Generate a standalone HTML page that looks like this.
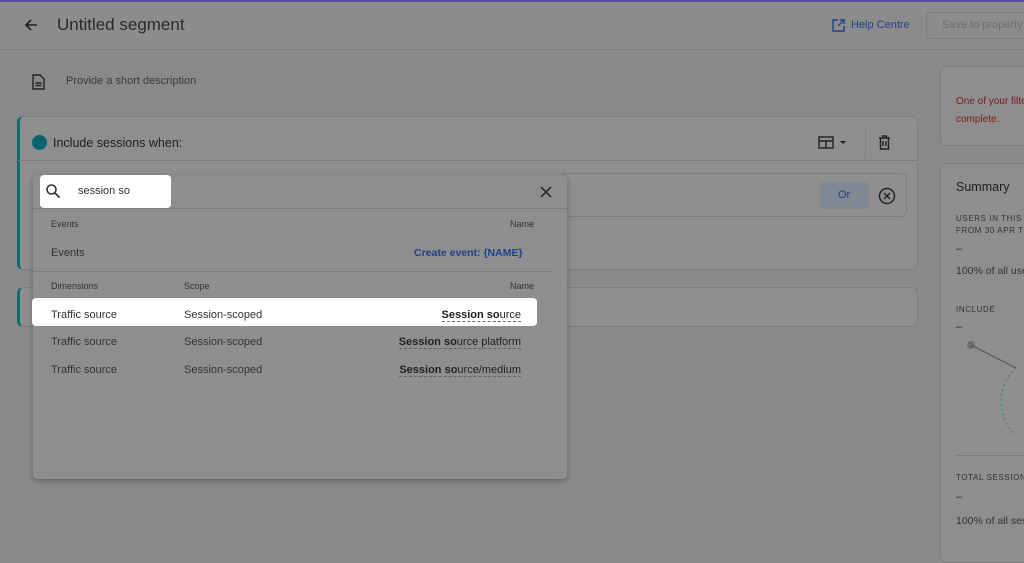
<!DOCTYPE html>
<html><head><meta charset="utf-8"><style>
*{box-sizing:border-box;margin:0;padding:0}
body{width:1024px;height:553px;overflow:hidden;background:#8a8a8a;font-family:"Liberation Sans",sans-serif;position:relative;color:#2a2a2a}
.a{position:absolute}
.card{position:absolute;background:#8e8e8e;border:1px solid #7f7f7f;border-radius:6px}
.t{position:absolute;font-size:11px;white-space:nowrap}
.dash{border-bottom:1px dashed #666}
</style></head><body>
<div class="a" style="left:0;top:0;width:1024px;height:2px;background:#5a4d99"></div>
<div class="a" style="left:0;top:2px;width:1024px;height:48px;background:#8c8c8c;border-bottom:1px solid #7c7c7c"></div>
<svg class="a" style="left:23px;top:17px" width="16" height="16" viewBox="0 0 16 16"><path d="M14 8H3M8 3L3 8l5 5" stroke="#222" stroke-width="1.6" fill="none"/></svg>
<div class="t" style="left:57px;top:15px;font-size:17px;color:#2a2a2a">Untitled segment</div>
<svg class="a" style="left:832px;top:19px" width="13" height="13" viewBox="0 0 13 13"><path d="M6 1H1v11h11V7M8 1h4v4M12 1L6 7" stroke="#22408a" stroke-width="1.4" fill="none"/></svg>
<div class="t" style="left:851px;top:19px;font-size:11px;color:#22408a">Help Centre</div>
<div class="a" style="left:926px;top:12px;width:110px;height:27px;border:1px solid #7c7c7c;border-radius:4px"></div>
<div class="t" style="left:942px;top:19px;font-size:11px;color:#6e6e6e">Save to property</div>
<div class="a" style="left:17px;top:66px;width:900px;height:32px;background:#87898a;border-radius:4px"></div>
<svg class="a" style="left:32px;top:74px" width="13" height="16" viewBox="0 0 13 16"><path d="M1 1h7l4 4v10H1z M3.5 9h6M3.5 11.5h6" stroke="#222" stroke-width="1.4" fill="none"/></svg>
<div class="t" style="left:66px;top:75px;font-size:11px;color:#3a3a3a">Provide a short description</div>
<div class="card" style="left:17px;top:116px;width:901px;height:154px;border-left:3px solid #0c6f78"></div>
<div class="a" style="left:18px;top:160px;width:899px;height:1px;background:#7c7c7c"></div>
<div class="a" style="left:32px;top:135px;width:15px;height:15px;border-radius:50%;background:#0b6570"></div>
<div class="t" style="left:53px;top:136px;font-size:12.5px;color:#1e1e1e">Include sessions when:</div>
<svg class="a" style="left:818px;top:136px" width="32" height="14" viewBox="0 0 32 14"><rect x="1" y="1" width="14" height="11" stroke="#222" stroke-width="1.4" fill="none"/><path d="M1 5h14M8 5v7" stroke="#222" stroke-width="1.4"/><path d="M22 5h6l-3 3z" fill="#222"/></svg>
<div class="a" style="left:865px;top:128px;width:1px;height:30px;background:#7f7f7f"></div>
<svg class="a" style="left:878px;top:135px" width="13" height="15" viewBox="0 0 13 15"><path d="M1 3h11M4.5 3V1h4v2M2.5 3v11h8V3M5 6v5M8 6v5" stroke="#222" stroke-width="1.4" fill="none"/></svg>
<div class="a" style="left:560px;top:173px;width:347px;height:44px;border:1px solid #7c7c7c;border-radius:6px"></div>
<div class="a" style="left:820px;top:182px;width:49px;height:27px;background:#7f8893;border-radius:3px"></div>
<div class="t" style="left:838px;top:189px;font-size:11px;color:#22408a">Or</div>
<svg class="a" style="left:878px;top:187px" width="18" height="18" viewBox="0 0 18 18"><circle cx="9" cy="9" r="7.5" stroke="#222" stroke-width="1.4" fill="none"/><path d="M6 6l6 6M12 6l-6 6" stroke="#222" stroke-width="1.4"/></svg>
<div class="card" style="left:17px;top:287px;width:901px;height:40px;border-left:3px solid #0c6f78"></div>
<div class="card" style="left:940px;top:66px;width:100px;height:80px"></div>
<div class="t" style="left:956px;top:93px;font-size:10px;color:#7a1c1c;line-height:18px">One of your filters is in<br>complete.</div>
<div class="card" style="left:940px;top:163px;width:100px;height:400px"></div>
<div class="t" style="left:956px;top:180px;font-size:12.5px;color:#1e1e1e">Summary</div>
<div class="t" style="left:956px;top:213px;font-size:8px;color:#333;letter-spacing:.6px;line-height:12px">USERS IN THIS SEGMENT<br>FROM 30 APR TO</div>
<div class="t" style="left:956px;top:243px;font-size:11px">–</div>
<div class="t" style="left:956px;top:265px;font-size:10.5px;color:#333">100% of all users</div>
<div class="t" style="left:956px;top:305px;font-size:8px;color:#333;letter-spacing:.6px">INCLUDE</div>
<div class="t" style="left:956px;top:321px;font-size:11px">–</div>
<svg class="a" style="left:960px;top:335px" width="64" height="110" viewBox="0 0 64 110"><circle cx="11" cy="10" r="4" fill="#6e6e6e"/><path d="M11 10L56 33" stroke="#555" stroke-width="1"/><path d="M56 33 A45 45 0 0 0 56 100" stroke="#4d7b80" stroke-width="1.3" stroke-dasharray="2 3" fill="none"/></svg>
<div class="a" style="left:956px;top:455px;width:70px;height:1px;background:#7c7c7c"></div>
<div class="t" style="left:956px;top:473px;font-size:8px;color:#333;letter-spacing:.6px">TOTAL SESSIONS</div>
<div class="t" style="left:956px;top:491px;font-size:11px">–</div>
<div class="t" style="left:956px;top:515px;font-size:10.5px;color:#333">100% of all sessions</div>

<div class="a" style="left:33px;top:175px;width:534px;height:304px;background:#8e8e8e;border-radius:5px;box-shadow:0 2px 6px rgba(0,0,0,.3)"></div>
<div class="a" style="left:33px;top:208px;width:534px;height:1px;background:#7c7c7c"></div>
<div class="a" style="left:40px;top:175px;width:131px;height:33px;background:#fff;border-radius:4px"></div>
<svg class="a" style="left:45px;top:183px" width="16" height="16" viewBox="0 0 16 16"><circle cx="6.5" cy="6.5" r="4.5" stroke="#333" stroke-width="1.6" fill="none"/><path d="M10 10l4.5 4.5" stroke="#333" stroke-width="1.8"/></svg>
<div class="t" style="left:78px;top:185px;font-size:11px;color:#333">session so</div>
<svg class="a" style="left:540px;top:186px" width="12" height="12" viewBox="0 0 12 12"><path d="M1 1l10 10M11 1L1 11" stroke="#222" stroke-width="1.5"/></svg>
<div class="t" style="left:51px;top:219px;font-size:9px;color:#333">Events</div>
<div class="t" style="left:510px;top:219px;font-size:9px;color:#333">Name</div>
<div class="t" style="left:51px;top:247px;font-size:11px;color:#333">Events</div>
<div class="t" style="left:414px;top:247px;font-size:10.5px;color:#22408a;font-weight:bold">Create event: {NAME}</div>
<div class="a" style="left:33px;top:271px;width:520px;height:1px;background:#7c7c7c"></div>
<div class="t" style="left:51px;top:281px;font-size:9px;color:#333">Dimensions</div>
<div class="t" style="left:184px;top:281px;font-size:9px;color:#333">Scope</div>
<div class="t" style="left:510px;top:281px;font-size:9px;color:#333">Name</div>
<div class="a" style="left:32px;top:298px;width:505px;height:28px;background:#fff;border-radius:4px"></div>
<div class="t" style="left:51px;top:309px;color:#333">Traffic source</div>
<div class="t" style="left:184px;top:309px;color:#333">Session-scoped</div>
<div class="t dash" style="right:503px;top:309px;color:#222"><b>Session so</b>urce</div>
<div class="t" style="left:51px;top:336px;color:#333">Traffic source</div>
<div class="t" style="left:184px;top:336px;color:#333">Session-scoped</div>
<div class="t dash" style="right:503px;top:336px;color:#222"><b>Session so</b>urce platform</div>
<div class="t" style="left:51px;top:364px;color:#333">Traffic source</div>
<div class="t" style="left:184px;top:364px;color:#333">Session-scoped</div>
<div class="t dash" style="right:503px;top:364px;color:#222"><b>Session so</b>urce/medium</div>
</body></html>
